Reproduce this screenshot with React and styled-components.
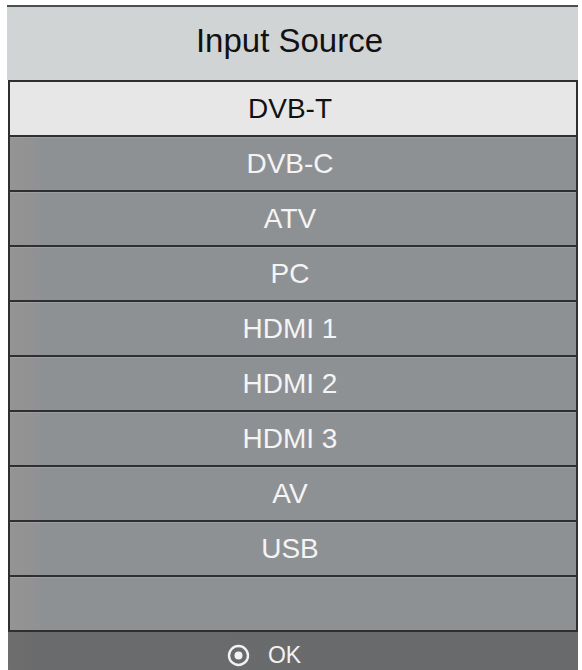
import React from "react";
import styled, { createGlobalStyle } from "styled-components";

const GlobalStyle = createGlobalStyle`
  html, body {
    margin: 0;
    padding: 0;
    background: #ffffff;
  }
  body {
    font-family: "Liberation Sans", Arial, sans-serif;
  }
`;

const Panel = styled.div`
  width: 571px;
  margin: 5px 0 0 7px;
  display: flex;
  flex-direction: column;
`;

const Header = styled.div`
  height: 75px;
  box-sizing: border-box;
  padding: 0 6px 5px 0;
  border-top: 2px solid #4e4e4e;
  background: #d1d4d5;
  display: flex;
  align-items: center;
  justify-content: center;
  font-size: 33px;
  color: #111;
`;

const List = styled.div`
  margin-left: 1px;
  border-left: 2px solid #2f2f2f;
  border-right: 2px solid #2f2f2f;
  border-bottom: 2px solid #2f2f2f;
  display: flex;
  flex-direction: column;
`;

const Row = styled.div`
  height: 53px;
  padding-right: 6px;
  border-top: 2px solid #2f2f2f;
  display: flex;
  align-items: center;
  justify-content: center;
  font-size: 28px;
  color: ${(p) => (p.$active ? "#111" : "#f4f4f4")};
  background: ${(p) =>
    p.$active
      ? "#e7e7e7"
      : "linear-gradient(90deg, #959493 0px, #929293 22px, #8e9194 32px, #8e9194 100%)"};
  box-shadow: ${(p) =>
    p.$active ? "none" : "inset 0 1px 0 rgba(255,255,255,0.12)"};
`;

const Footer = styled.div`
  margin-left: 1px;
  height: 40px;
  box-sizing: border-box;
  padding: 6px 58px 0 0;
  background: linear-gradient(90deg, #6f6e6d 0px, #6a6b6c 25px, #686a6c 100%);
  display: flex;
  align-items: center;
  justify-content: center;
  gap: 18px;
  color: #f2f2f2;
  font-size: 23px;
`;

const OkIcon = styled.svg`
  width: 23px;
  height: 23px;
`;

const items = ["DVB-T", "DVB-C", "ATV", "PC", "HDMI 1", "HDMI 2", "HDMI 3", "AV", "USB", ""];

export default function App() {
  return (
    <>
      <GlobalStyle />
      <Panel>
        <Header>Input Source</Header>
        <List>
          {items.map((label, i) => (
            <Row key={i} $active={i === 0}>
              {label}
            </Row>
          ))}
        </List>
        <Footer>
          <OkIcon viewBox="0 0 23 23">
            <circle cx="11.5" cy="11.5" r="9.5" fill="none" stroke="#f2f2f2" strokeWidth="2.4" />
            <circle cx="11.5" cy="11.5" r="4" fill="#f2f2f2" />
          </OkIcon>
          <span>OK</span>
        </Footer>
      </Panel>
    </>
  );
}
